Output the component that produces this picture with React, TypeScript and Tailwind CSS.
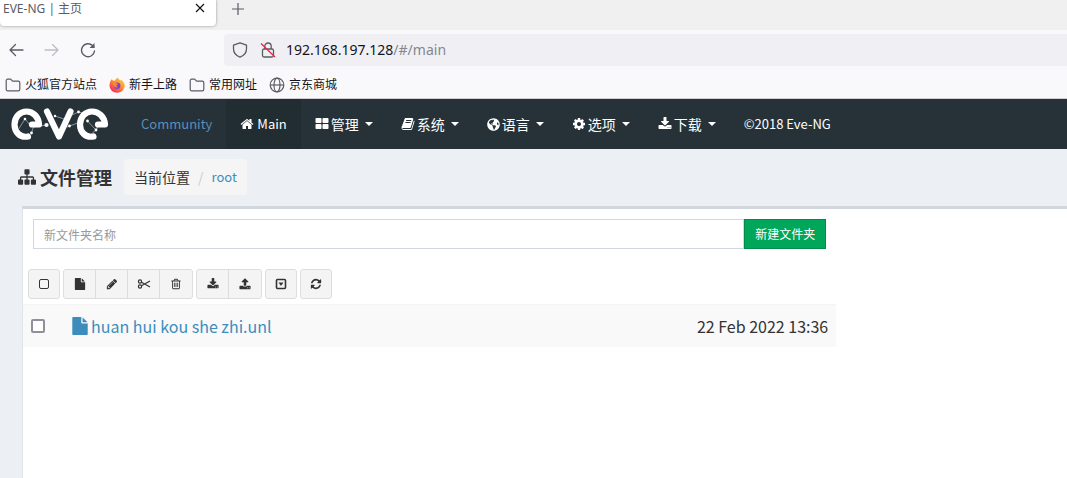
import React from 'react';
import { FaGlobeAmericas } from 'react-icons/fa';

const ICONS = {
  home: 'M1472 992v480q0 26-19 45t-45 19h-384v-384h-256v384h-384q-26 0-45-19t-19-45v-480q0-1 .5-3t.5-3l575-474 575 474q1 2 1 6zm223-69l-62 74q-8 9-21 11h-3q-13 0-21-7l-692-577-692 577q-12 8-24 7-13-2-21-11l-62-74q-8-10-7-23.5t11-21.5l719-599q32-26 76-26t76 26l244 204v-195q0-14 9-23t23-9h192q14 0 23 9t9 23v408l219 182q10 8 11 21.5t-7 23.5z',
  grid: 'M832 1024v384q0 52-38 90t-90 38h-512q-52 0-90-38t-38-90v-384q0-52 38-90t90-38h512q52 0 90 38t38 90zm0-768v384q0 52-38 90t-90 38h-512q-52 0-90-38t-38-90v-384q0-52 38-90t90-38h512q52 0 90 38t38 90zm896 768v384q0 52-38 90t-90 38h-512q-52 0-90-38t-38-90v-384q0-52 38-90t90-38h512q52 0 90 38t38 90zm0-768v384q0 52-38 90t-90 38h-512q-52 0-90-38t-38-90v-384q0-52 38-90t90-38h512q52 0 90 38t38 90z',
  book: 'M1703 478q40 57 18 129l-275 906q-19 64-76.5 107.5t-122.5 43.5h-923q-77 0-148.5-53.5t-99.5-131.5q-24-67-2-127 0-4 3-27t4-37q1-8-3-21.5t-3-19.5q2-11 8-21t16.5-23.5 16.5-23.5q23-38 45-91.5t30-91.5q3-10 .5-30t-.5-28q3-11 17-28t17-23q21-36 42-92t25-90q1-9-2.5-32t.5-28q4-13 22-30.5t22-22.5q19-26 42.5-84.5t27.5-96.5q1-8-3-25.5t-2-26.5q2-8 9-18t18-23 17-21q8-12 16.5-30.5t15-35 16-36 19.5-32 26.5-23.5 36-11.5 47.5 5.5l-1 3q38-9 51-9h761q74 0 114 56t18 130l-274 906q-36 119-71.5 153.5t-128.5 34.5h-869q-27 0-38 15-11 16-1 43 24 70 144 70h923q29 0 56-15.5t35-41.5l300-987q7-22 5-57 38 15 59 43zm-1064 2q-4 13 2 22.5t20 9.5h608q13 0 25.5-9.5t16.5-22.5l21-64q4-13-2-22.5t-20-9.5h-608q-13 0-25.5 9.5t-16.5 22.5zm-83 256q-4 13 2 22.5t20 9.5h608q13 0 25.5-9.5t16.5-22.5l21-64q4-13-2-22.5t-20-9.5h-608q-13 0-25.5 9.5t-16.5 22.5z',
  cog: 'M1152 896q0-106-75-181t-181-75-181 75-75 181 75 181 181 75 181-75 75-181zm512-109v222q0 12-8 23t-20 13l-185 28q-19 54-39 91 35 50 107 138 10 12 10 25t-9 23q-27 37-99 108t-94 71q-12 0-26-9l-138-108q-44 23-91 38-16 136-29 186-7 28-36 28h-222q-14 0-24.5-8.5t-11.5-21.5l-28-184q-49-16-90-37l-141 107q-10 9-25 9-14 0-25-11-126-114-165-168-7-10-7-23 0-12 8-23 15-21 51-66.5t54-70.5q-27-50-41-99l-183-27q-13-2-21-12.5t-8-23.5v-222q0-12 8-23t19-13l186-28q14-46 39-92-40-57-107-138-10-12-10-24 0-10 9-23 26-36 98.5-107.5t94.5-71.5q13 0 26 10l138 107q44-23 91-38 16-136 29-186 7-28 36-28h222q14 0 24.5 8.5t11.5 21.5l28 184q49 16 90 37l142-107q9-9 24-9 13 0 25 10 129 119 165 170 7 8 7 22 0 12-8 23-15 21-51 66.5t-54 70.5q26 50 41 98l183 28q13 2 21 12.5t8 23.5z',
  download: 'M1344 1344q0-26-19-45t-45-19-45 19-19 45 19 45 45 19 45-19 19-45zm256 0q0-26-19-45t-45-19-45 19-19 45 19 45 45 19 45-19 19-45zm128-224v320q0 40-28 68t-68 28h-1472q-40 0-68-28t-28-68v-320q0-40 28-68t68-28h465l135 136q58 56 136 56t136-56l136-136h464q40 0 68 28t28 68zm-325-569q17 41-14 70l-448 448q-18 19-45 19t-45-19l-448-448q-31-29-14-70 17-39 59-39h256v-448q0-26 19-45t45-19h256q26 0 45 19t19 45v448h256q42 0 59 39z',
  upload: 'M1344 1472q0-26-19-45t-45-19-45 19-19 45 19 45 45 19 45-19 19-45zm256 0q0-26-19-45t-45-19-45 19-19 45 19 45 45 19 45-19 19-45zm128-224v320q0 40-28 68t-68 28h-1472q-40 0-68-28t-28-68v-320q0-40 28-68t68-28h427q21 56 70.5 92t110.5 36h256q61 0 110.5-36t70.5-92h427q40 0 68 28t28 68zm-325-648q-17 40-59 40h-256v448q0 26-19 45t-45 19h-256q-26 0-45-19t-19-45v-448h-256q-42 0-59-40-17-39 14-69l448-448q18-19 45-19t45 19l448 448q31 30 14 69z',
  refresh: 'M1639 1056q0 5-1 7-64 268-268 434.5t-478 166.5q-146 0-282.5-55t-243.5-157l-129 129q-19 19-45 19t-45-19-19-45v-448q0-26 19-45t45-19h448q26 0 45 19t19 45-19 45l-137 137q71 66 161 102t187 36q134 0 250-65t186-179q11-17 53-117 8-23 30-23h192q13 0 22.5 9.5t9.5 22.5zm25-800v448q0 26-19 45t-45 19h-448q-26 0-45-19t-19-45 19-45l138-138q-148-137-349-137-134 0-250 65t-186 179q-11 17-53 117-8 23-30 23h-199q-13 0-22.5-9.5t-9.5-22.5v-7q65-268 270-434.5t480-166.5q146 0 284 55.5t245 156.5l130-129q19-19 45-19t45 19 19 45z',
  file: 'M1152 512v-472q22 14 36 28l408 408q14 14 28 36h-472zm-128 32q0 40 28 68t68 28h544v1056q0 40-28 68t-68 28h-1344q-40 0-68-28t-28-68v-1600q0-40 28-68t68-28h800v544z',
  pencil: 'M491 1536l91-91-235-235-91 91v107h128v128h107zm523-928q0-22-22-22-10 0-17 7l-542 542q-7 7-7 17 0 22 22 22 10 0 17-7l542-542q7-7 7-17zm-54-192l416 416-832 832h-416v-416zm683 96q0 53-37 90l-166 166-416-416 166-165q36-38 90-38 53 0 91 38l235 234q37 39 37 91z',
  trash: 'M704 736v576q0 14-9 23t-23 9h-64q-14 0-23-9t-9-23v-576q0-14 9-23t23-9h64q14 0 23 9t9 23zm256 0v576q0 14-9 23t-23 9h-64q-14 0-23-9t-9-23v-576q0-14 9-23t23-9h64q14 0 23 9t9 23zm256 0v576q0 14-9 23t-23 9h-64q-14 0-23-9t-9-23v-576q0-14 9-23t23-9h64q14 0 23 9t9 23zm128 724v-948h-896v948q0 22 7 40.5t14.5 27 10.5 8.5h832q3 0 10.5-8.5t14.5-27 7-40.5zm-672-1076h448l-48-117q-7-9-17-11h-317q-10 2-17 11zm928 32v64q0 14-9 23t-23 9h-96v948q0 83-47 143.5t-113 60.5h-832q-66 0-113-58.5t-47-141.5v-952h-96q-14 0-23-9t-9-23v-64q0-14 9-23t23-9h309l70-167q15-37 54-63t79-26h320q40 0 79 26t54 63l70 167h309q14 0 23 9t9 23z',
  sitemap: 'M1792 1248v320q0 40-28 68t-68 28h-320q-40 0-68-28t-28-68v-320q0-40 28-68t68-28h96v-192h-512v192h96q40 0 68 28t28 68v320q0 40-28 68t-68 28h-320q-40 0-68-28t-28-68v-320q0-40 28-68t68-28h96v-192h-512v192h96q40 0 68 28t28 68v320q0 40-28 68t-68 28h-320q-40 0-68-28t-28-68v-320q0-40 28-68t68-28h96v-192q0-52 38-90t90-38h512v-192h-96q-40 0-68-28t-28-68v-320q0-40 28-68t68-28h320q40 0 68 28t28 68v320q0 40-28 68t-68 28h-96v192h512q52 0 90 38t38 90v192h96q40 0 68 28t28 68z',
};

type IconName = keyof typeof ICONS;

const Icon = ({ name, className }: { name: IconName; className: string }) => (
  <svg viewBox="0 0 1792 1792" fill="currentColor" className={`shrink-0 ${className}`} aria-hidden="true">
    <path d={ICONS[name]} />
  </svg>
);

const FolderIcon = () => (
  <svg viewBox="0 0 16 16" className="size-4 shrink-0" fill="none" stroke="#5b5b66" strokeWidth="1.2" strokeLinejoin="round">
    <path d="M1.2 12.2V3.6a1.4 1.4 0 0 1 1.4-1.4h3l2 2h5.6a1.6 1.6 0 0 1 1.6 1.6v6.4a1.6 1.6 0 0 1-1.6 1.6H2.6a1.4 1.4 0 0 1-1.4-1.6z" />
  </svg>
);

const GlobeIcon = () => (
  <svg viewBox="0 0 16 16" className="size-4 shrink-0" fill="none" stroke="#5b5b66" strokeWidth="1.2">
    <circle cx="8" cy="8" r="6.8" />
    <ellipse cx="8" cy="8" rx="3" ry="6.8" />
    <path d="M1.2 8h13.6" />
  </svg>
);

const FirefoxIcon = () => (
  <svg viewBox="0 0 16 16" className="size-4 shrink-0">
    <defs>
      <linearGradient id="fox" x1="1" y1="0" x2="0.2" y2="1">
        <stop offset="0" stopColor="#ffe14a" />
        <stop offset="0.45" stopColor="#ff9a2b" />
        <stop offset="1" stopColor="#f0245c" />
      </linearGradient>
    </defs>
    <path fill="url(#fox)" d="M2.5 2.2l1.7 1.6 1.8-.4C6.6 2 8 1 9 .4c.2 1.6 1.6 2.3 2.6 3.2L12 2.7c2.3 1.7 3.8 3.5 3.8 6.1A7.6 7 0 0 1 8 15.8 7.5 7.2 0 0 1 .5 8.6C.5 5.8 1.6 4 2.5 2.2z" />
    <circle cx="8.2" cy="8.7" r="3.2" fill="#7a3fe0" />
    <path fill="#ff8a26" d="M3.8 5.5c1.5-.5 3 0 3.8 1l1.8.3c-.3 1-1.7 1.1-2 1.7-.3.9.8 1.6 2 1.2-1 1.3-3.6 1-4.2-.7z" />
  </svg>
);

const EveLogo = () => (
  <svg viewBox="0 0 98 34" className="h-[34px] w-[98px] shrink-0" fill="none" stroke="#fff" strokeLinecap="round" strokeLinejoin="round" role="img" aria-label="EVE">
    <g strokeWidth="6.2">
      <path d="M17 29.5C9 31 3.5 25 3.5 17.5 3.500 10 9 4.500 15.500 4.500c6.500 0 12 5 12.500 13H21" />
      <path d="M36 4.500L48 29.500 59.500 4.500" />
      <path d="M82.500 29.500c-8 1.500-13.500-4.500-13.500-12C69 10 74.500 4.500 81 4.500c6.500 0 12.500 5 13 13H87" />
    </g>
    <path strokeWidth="0.6" opacity="0.8" d="M7 23l7-11 5 6M20.500 26l2-6 13-2M44 9l12 4M56 20l16-6M61 8l6.500-3 8 2M76.500 14l8.500 9M79 28l6-5 3-5" />
    <g fill="#fff" stroke="none">
      <circle cx="14" cy="12" r="1.3" />
      <circle cx="20.500" cy="26" r="1.4" />
      <circle cx="35.500" cy="18" r="2.1" />
      <circle cx="44" cy="9" r="1.2" />
      <circle cx="58.500" cy="19" r="1.4" />
      <circle cx="67.500" cy="5" r="1.4" />
      <circle cx="76.500" cy="14" r="1.4" />
      <circle cx="85" cy="23" r="1.4" />
    </g>
  </svg>
);

const Caret = () => <span className="ml-1 border-x-4 border-t-4 border-x-transparent border-t-white" />;

const bookmarks = [
  { label: '火狐官方站点', icon: <FolderIcon /> },
  { label: '新手上路', icon: <FirefoxIcon /> },
  { label: '常用网址', icon: <FolderIcon /> },
  { label: '京东商城', icon: <GlobeIcon /> },
];

const menus = [
  { label: '管理', icon: <Icon name="grid" className="size-[14px]" /> },
  { label: '系统', icon: <Icon name="book" className="size-[14px]" /> },
  { label: '语言', icon: <FaGlobeAmericas className="size-[13px]" /> },
  { label: '选项', icon: <Icon name="cog" className="size-[14px]" /> },
  { label: '下载', icon: <Icon name="download" className="size-[14px]" /> },
];

const tools = [
  [
    {
      label: '全选',
      icon: (
        <svg viewBox="0 0 12 12" className="size-3" fill="none" stroke="currentColor">
          <rect x="1.5" y="1.5" width="9" height="9" rx="1.5" />
        </svg>
      ),
    },
  ],
  [
    { label: '新建', icon: <Icon name="file" className="size-3" /> },
    { label: '重命名', icon: <Icon name="pencil" className="size-3" /> },
    {
      label: '剪切',
      icon: (
        <svg viewBox="0 0 14 12" className="h-3 w-[14px]" fill="none" stroke="currentColor" strokeWidth="1.2">
          <circle cx="3" cy="3.500" r="1.600" />
          <circle cx="3" cy="8.500" r="1.600" />
          <path d="M4.500 4.300L13 9M4.500 7.700L13 3" />
        </svg>
      ),
    },
    { label: '删除', icon: <Icon name="trash" className="size-3" /> },
  ],
  [
    { label: '导入', icon: <Icon name="download" className="size-3" /> },
    { label: '导出', icon: <Icon name="upload" className="size-3" /> },
  ],
  [
    {
      label: '更多',
      icon: (
        <svg viewBox="0 0 12 12" className="size-3" fill="none" stroke="currentColor" strokeWidth="1.6">
          <rect x="1.5" y="1.5" width="9" height="9" rx="1" />
          <path d="M3.500 4.500h5L6 8z" fill="currentColor" stroke="none" />
        </svg>
      ),
    },
  ],
  [{ label: '刷新', icon: <Icon name="refresh" className="size-3" /> }],
];

const BrowserChrome = () => (
  <div className="bg-[#f9f9fb] font-['Noto_Sans','Noto_Sans_CJK_SC',sans-serif] text-[#15141a]">
    <div className="flex h-[30px] items-start bg-[#f0f0f0]">
      <div className="flex h-[26px] w-[216px] items-start justify-between rounded-b bg-white pr-2 pl-[3px] shadow-[0_0_3px_rgba(0,0,0,0.4)]">
        <span className="text-xs leading-[18px] text-[#5b5b66]">EVE-NG | 主页</span>
        <button type="button" aria-label="关闭标签页" className="flex size-4 items-center justify-center">
          <svg viewBox="0 0 10 10" className="size-[10px]" stroke="#15141a" strokeWidth="1.2">
            <path d="M1 1l8 8M9 1L1 9" />
          </svg>
        </button>
      </div>
      <button type="button" aria-label="新标签页" className="ml-[14px] flex h-[18px] w-4 items-center justify-center">
        <svg viewBox="0 0 12 12" className="size-3" stroke="#5b5b66" strokeWidth="1.2">
          <path d="M6 0v12M0 6h12" />
        </svg>
      </button>
    </div>

    <div className="flex h-10 items-center pl-2">
      <div className="flex w-[216px] items-center gap-5">
        <button type="button" aria-label="后退">
          <svg viewBox="0 0 16 16" className="size-4" fill="none" stroke="#5b5b66" strokeWidth="1.3" strokeLinecap="round" strokeLinejoin="round">
            <path d="M15 8H2M7.500 2.500L2 8l5.500 5.500" />
          </svg>
        </button>
        <button type="button" aria-label="前进" disabled>
          <svg viewBox="0 0 16 16" className="size-4" fill="none" stroke="#bdbdc3" strokeWidth="1.3" strokeLinecap="round" strokeLinejoin="round">
            <path d="M1 8h13M8.500 2.500L14 8l-5.500 5.500" />
          </svg>
        </button>
        <button type="button" aria-label="刷新页面">
          <svg viewBox="0 0 16 16" className="size-4" fill="none" stroke="#5b5b66" strokeWidth="1.4" strokeLinecap="round" strokeLinejoin="round">
            <path d="M14.500 9A6.500 6.500 0 1 1 12.500 3.500L14 5" />
            <path d="M14.500 1v5h-5z" fill="#5b5b66" stroke="none" />
          </svg>
        </button>
      </div>
      <div className="flex h-8 flex-1 items-center rounded-l bg-[#f0f0f4] pl-2">
        <svg viewBox="0 0 16 16" className="size-4" fill="none" stroke="#5b5b66" strokeWidth="1.3" strokeLinejoin="round">
          <path d="M8 .8l6.500 2.400v3.600c0 3.800-2.500 6.900-6.500 8.400-4-1.500-6.500-4.600-6.500-8.400V3.200z" />
        </svg>
        <svg viewBox="0 0 16 16" className="ml-3 size-4" fill="none" stroke="#5b5b66" strokeWidth="1.3">
          <rect x="2.5" y="7" width="11" height="8" rx="1.5" />
          <path d="M4.800 7V4.200a3.200 3.200 0 0 1 6.400 0V7" />
          <path d="M1 1.500l14 13.500" stroke="#e22850" />
        </svg>
        <span className="ml-[10px] text-sm">
          192.168.197.128<span className="text-[#85858d]">/#/main</span>
        </span>
      </div>
    </div>

    <nav className="flex h-[29px] items-center gap-3 border-b border-[#cfcfd3] pt-px pl-[5px] text-xs">
      {bookmarks.map((b) => (
        <a key={b.label} href="#" className="flex items-center gap-1 whitespace-nowrap">
          {b.icon}
          {b.label}
        </a>
      ))}
    </nav>
  </div>
);

const App: React.FC = () => {
  return (
    <div className="flex min-h-screen flex-col bg-[#ecf0f5] font-['Noto_Sans_CJK_SC',sans-serif] text-[#333]">
      <BrowserChrome />

      <nav className="flex h-[50px] items-stretch bg-[#263238] text-[13px] whitespace-nowrap text-white">
        <a href="#" className="flex w-[127px] items-center pl-[11px]">
          <EveLogo />
        </a>
        <a href="#" className="flex items-center px-[14px] text-[#5a8fb8]">Community</a>
        <a href="#" className="flex items-center gap-[3px] bg-[#222d32] px-[14px]">
          <Icon name="home" className="size-[14px]" />
          Main
        </a>
        {menus.map((m) => (
          <button key={m.label} type="button" className="flex items-center gap-[2px] px-[14px] text-sm">
            {m.icon}
            {m.label}
            <Caret />
          </button>
        ))}
        <span className="flex items-center px-[14px]">©2018 Eve-NG</span>
      </nav>

      <header className="flex h-[57px] items-center gap-3 pb-[2px] pl-[18px]">
        <h1 className="flex items-center gap-1 text-lg leading-6 font-bold">
          <Icon name="sitemap" className="size-[18px]" />
          文件管理
        </h1>
        <ol className="flex h-9 items-center rounded bg-[#f5f5f5] px-[10px] text-sm">
          <li>当前位置</li>
          <li className="px-2 text-[#ccc]">/</li>
          <li>
            <a href="#" className="text-[13px] text-[#3c8dbc]">root</a>
          </li>
        </ol>
      </header>

      <main className="ml-[22px] flex-1 border-t-3 border-l border-t-[#d2d6de] border-l-[#dfe3ea] bg-white">
        <div className="w-[77.9%]">
          <form className="flex px-[10px] pt-[10px] text-xs" onSubmit={(e) => e.preventDefault()}>
            <input
              type="text"
              aria-label="新文件夹名称"
              placeholder="新文件夹名称"
              className="h-[30px] min-w-0 flex-1 border border-[#d2d6de] px-[10px] outline-none placeholder:text-[#999]"
            />
            <button type="submit" className="h-[30px] border border-[#008d4c] bg-[#00a65a] px-[10px] text-white">新建文件夹</button>
          </form>

          <div className="mt-5 flex gap-[3px] pl-[5px]">
            {tools.map((group) => (
              <div key={group[0].label} className="flex divide-x divide-[#ddd] overflow-hidden rounded-[3px] border border-[#ddd] bg-[#f4f4f4] text-[#333]">
                {group.map((t) => (
                  <button key={t.label} type="button" aria-label={t.label} className="flex h-7 w-8 items-center justify-center only:w-[30px]">
                    {t.icon}
                  </button>
                ))}
              </div>
            ))}
          </div>

          <table className="mt-[5px] w-full bg-[#f9f9f9] text-base leading-5">
            <tbody>
              <tr className="h-[42px] border-t border-[#f4f4f4]">
                <td className="w-12 pl-2">
                  <input
                    type="checkbox"
                    aria-label="huan hui kou she zhi.unl"
                    className="block size-[14px] appearance-none rounded-[2px] border-2 border-[#8f8f9d] bg-white"
                  />
                </td>
                <td>
                  <a href="#" className="flex items-center gap-[2px] text-[#3c8dbc]">
                    <Icon name="file" className="size-[18px]" />
                    huan hui kou she zhi.unl
                  </a>
                </td>
                <td className="pr-2 text-right">22 Feb 2022 13:36</td>
              </tr>
            </tbody>
          </table>
        </div>
      </main>
    </div>
  );
};

export default App;
